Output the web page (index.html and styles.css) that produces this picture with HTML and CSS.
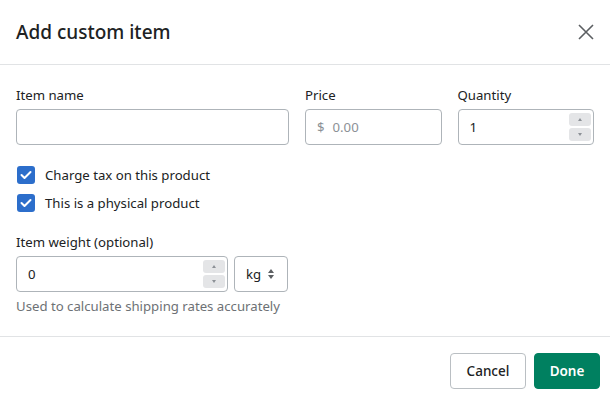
FILE: index.html
```html
<!DOCTYPE html>
<html lang="en">
<head>
  <meta charset="UTF-8" />
  <title>Add custom item</title>
  <link rel="stylesheet" href="styles.css">
</head>
<body>

<div class="modal">
  <div class="modal-header">
    <h2>Add custom item</h2>
    <button class="close-btn" aria-label="Close">
      <svg width="16" height="16" viewBox="0 0 16 16"><path d="M1 1 L15 15 M15 1 L1 15" stroke="#5c5f62" stroke-width="1.6" fill="none"/></svg>
    </button>
  </div>

  <div class="modal-body">
    <div class="row">
      <div class="field">
        <label>Item name</label>
        <div class="input"></div>
      </div>
      <div class="field">
        <label>Price</label>
        <div class="input"><span class="muted">$</span><span class="muted">0.00</span></div>
      </div>
      <div class="field">
        <label>Quantity</label>
        <div class="input number"><span>1</span>
          <div class="spinner"><span class="up"></span><span class="down"></span></div>
        </div>
      </div>
    </div>

    <div class="checks">
      <label class="check"><span class="box"><svg width="12" height="10" viewBox="0 0 12 10"><path d="M1.5 5 L4.5 8 L10.5 2" stroke="#fff" stroke-width="2" fill="none" stroke-linecap="round" stroke-linejoin="round"/></svg></span>Charge tax on this product</label>
      <label class="check"><span class="box"><svg width="12" height="10" viewBox="0 0 12 10"><path d="M1.5 5 L4.5 8 L10.5 2" stroke="#fff" stroke-width="2" fill="none" stroke-linecap="round" stroke-linejoin="round"/></svg></span>This is a physical product</label>
    </div>

    <div class="weight">
      <label>Item weight (optional)</label>
      <div class="weight-row">
        <div class="input number weight-input"><span>0</span>
          <div class="spinner"><span class="up"></span><span class="down"></span></div>
        </div>
        <div class="input select"><span>kg</span>
          <svg width="8" height="12" viewBox="0 0 8 12"><path d="M4 1 L7 5 H1 Z M4 11 L7 7 H1 Z" fill="#5c5f62"/></svg>
        </div>
      </div>
      <p class="help">Used to calculate shipping rates accurately</p>
    </div>
  </div>

  <div class="modal-footer">
    <button class="btn">Cancel</button>
    <button class="btn primary">Done</button>
  </div>
</div>

</body>
</html>
```

FILE: styles.css
```css
* { box-sizing: border-box; }
body {
  margin: 0;
  font-family: 'Noto Sans', sans-serif;
  font-size: 13.2px;
  color: #202223;
  background: #fff;
}
.modal-header {
  height: 65px;
  display: flex;
  align-items: center;
  justify-content: space-between;
  padding: 0 16px;
  border-bottom: 1px solid #e1e3e5;
}
.modal-header h2 {
  margin: 0;
  font-size: 19px;
  font-weight: 500;
}
.close-btn {
  background: none;
  border: none;
  padding: 0;
  width: 16px;
  height: 16px;
  cursor: pointer;
}
.modal-body { padding: 20px 16px; }
label { display: block; line-height: 20px; margin-bottom: 4px; }
.row {
  display: grid;
  grid-template-columns: 2fr 1fr 1fr;
  gap: 16px;
}
.input {
  height: 36px;
  border: 1px solid #aeb4b9;
  border-radius: 4px;
  display: flex;
  align-items: center;
  gap: 8px;
  padding: 0 11px;
}
.muted { color: #8c9196; }
.number { justify-content: space-between; padding-right: 2px; }
.spinner { display: flex; flex-direction: column; gap: 2px; }
.spinner span {
  width: 22px;
  height: 13px;
  background: #e4e5e7;
  border-radius: 3px;
  position: relative;
}
.spinner span::after {
  content: '';
  position: absolute;
  left: 9px;
  border-left: 2.5px solid transparent;
  border-right: 2.5px solid transparent;
}
.spinner .up::after { top: 5px; border-bottom: 3px solid #8c9196; }
.spinner .down::after { top: 5px; border-top: 3px solid #8c9196; }
.checks { margin-top: 16px; }
.check {
  display: flex;
  align-items: center;
  gap: 10px;
  height: 28px;
  margin: 0;
}
.box {
  width: 18px;
  height: 18px;
  border-radius: 3px;
  background: #2c6ecb;
  display: flex;
  align-items: center;
  justify-content: center;
  margin-left: 1px;
}
.weight { margin-top: 15px; }
.weight-row { display: flex; gap: 6px; }
.weight-input { width: 212px; }
.select { width: 54px; gap: 6px; }
.help { margin: 4px 0 0; line-height: 20px; color: #6d7175; }
.modal-footer {
  border-top: 1px solid #e1e3e5;
  display: flex;
  justify-content: flex-end;
  gap: 8px;
  padding: 16px 10px;
}
.btn {
  font-family: inherit;
  font-size: 13.5px;
  font-weight: 500;
  height: 36px;
  width: 76px;
  border: 1px solid #babfc3;
  border-radius: 4px;
  background: #fff;
  color: #202223;
}
.btn.primary {
  width: 66px;
  background: #008060;
  border-color: #008060;
  color: #fff;
  font-weight: 600;
}
```
